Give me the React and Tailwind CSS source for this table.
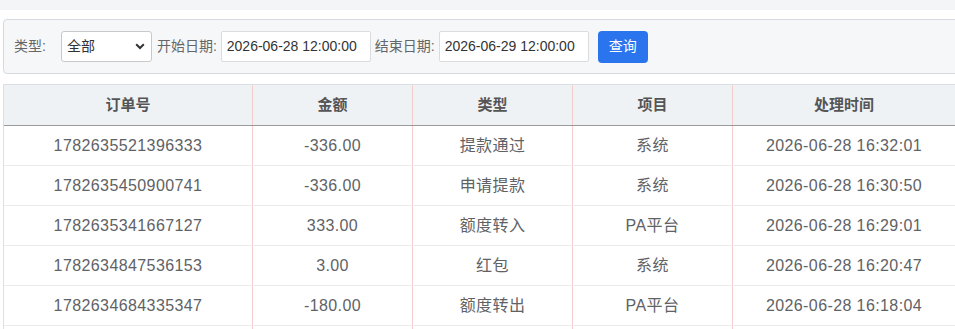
const rows = [
  { id: '1782635521396333', amount: '-336.00', type: '提款通过', item: '系统', time: '2026-06-28 16:32:01' },
  { id: '1782635450900741', amount: '-336.00', type: '申请提款', item: '系统', time: '2026-06-28 16:30:50' },
  { id: '1782635341667127', amount: '333.00', type: '额度转入', item: 'PA平台', time: '2026-06-28 16:29:01' },
  { id: '1782634847536153', amount: '3.00', type: '红包', item: '系统', time: '2026-06-28 16:20:47' },
  { id: '1782634684335347', amount: '-180.00', type: '额度转出', item: 'PA平台', time: '2026-06-28 16:18:04' },
]

const headers = ['订单号', '金额', '类型', '项目', '处理时间']

const font = { fontFamily: '"Liberation Sans", "Noto Sans CJK SC", sans-serif' }

const App = () => {
  return (
    <div className="w-[955px] h-[329px] overflow-hidden bg-white" style={font}>
      {/* top strip */}
      <div className="h-[10px] bg-[#f4f5f7]" />

      {/* filter bar */}
      <div className="pt-[9px] pl-[3px]">
        <div className="w-[990px] h-[55px] flex items-center pl-[10px] bg-[#f6f7f9] border border-[#d6d9dd] rounded-[4px] text-[14px] text-[#666]">
          <span className="mr-[15px]">类型:</span>
          <div className="w-[91px] h-[31px] flex items-center justify-between pl-[5px] pr-[5px] bg-white border border-[#c9c9c9] rounded-[3px] text-[#333]">
            <span>全部</span>
            <svg width="10" height="7" viewBox="0 0 10 7" className="mr-[1px]">
              <path d="M1.2 1.3 L5 5 L8.8 1.3" fill="none" stroke="#333" strokeWidth="2" />
            </svg>
          </div>
          <span className="ml-[5px] mr-[4px]">开始日期:</span>
          <div className="w-[150px] h-[31px] flex items-center pl-[5px] bg-white border border-[#dcdcdc] rounded-[2px] text-[#333]">
            2026-06-28 12:00:00
          </div>
          <span className="ml-[4px] mr-[4px]">结束日期:</span>
          <div className="w-[150px] h-[31px] flex items-center pl-[5px] bg-white border border-[#dcdcdc] rounded-[2px] text-[#333]">
            2026-06-29 12:00:00
          </div>
          <button className="ml-[9px] w-[50px] h-[32px] bg-[#2a74ee] rounded-[4px] text-white text-[14px]">
            查询
          </button>
        </div>
      </div>

      {/* table */}
      <div className="mt-[10px] ml-[3px] w-[952px] border-l border-t border-[#dcdfe6]">
        <div className="grid grid-cols-[249px_160px_160px_160px_1fr] h-[41px] bg-[#eff2f5] border-b border-[#9a9a9c] text-[15px] font-bold text-[#555]">
          {headers.map((h, i) => (
            <div key={h} className={`flex items-center justify-center ${i < 4 ? 'border-r border-[#f6cbcb]' : ''}`}>
              {h}
            </div>
          ))}
        </div>
        {rows.map((r) => (
          <div key={r.id} className="grid grid-cols-[249px_160px_160px_160px_1fr] h-[40px] border-b border-[#ececec] text-[16px] tracking-[0.4px] text-[#606266]">
            <div className="flex items-center justify-center border-r border-[#f6cbcb]">{r.id}</div>
            <div className="flex items-center justify-center border-r border-[#f6cbcb]">{r.amount}</div>
            <div className="flex items-center justify-center border-r border-[#f6cbcb]">{r.type}</div>
            <div className="flex items-center justify-center border-r border-[#f6cbcb]">{r.item}</div>
            <div className="flex items-center justify-center">{r.time}</div>
          </div>
        ))}
        {/* next row, below the fold */}
        <div className="grid grid-cols-[249px_160px_160px_160px_1fr] h-[40px]">
          <div className="border-r border-[#f6cbcb]" />
          <div className="border-r border-[#f6cbcb]" />
          <div className="border-r border-[#f6cbcb]" />
          <div className="border-r border-[#f6cbcb]" />
          <div />
        </div>
      </div>
    </div>
  )
}

export default App
